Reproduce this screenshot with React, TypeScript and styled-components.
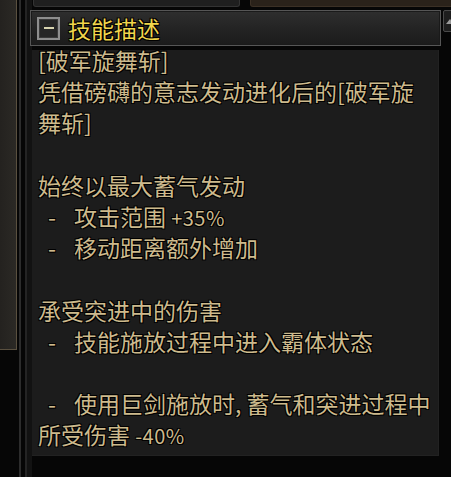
import styled, { createGlobalStyle } from "styled-components";

const GlobalStyle = createGlobalStyle`
  html, body {
    margin: 0;
    padding: 0;
    background: #060606;
  }
  * {
    box-sizing: border-box;
  }
`;

// each row of the description; num is the small latin value at the end
const lines: { text: string; num?: string; bullet?: boolean }[] = [
  { text: "[破军旋舞斩]" },
  { text: "凭借磅礴的意志发动进化后的[破军旋" },
  { text: "舞斩]" },
  { text: "" },
  { text: "始终以最大蓄气发动" },
  { text: "攻击范围 ", num: "+35%", bullet: true },
  { text: "移动距离额外增加", bullet: true },
  { text: "" },
  { text: "承受突进中的伤害" },
  { text: "技能施放过程中进入霸体状态", bullet: true },
  { text: "" },
  { text: "使用巨剑施放时, 蓄气和突进过程中", bullet: true },
  { text: "所受伤害 ", num: "-40%" },
];

const App = () => {
  return (
    <>
      <GlobalStyle />
      <Screen>
        <SidePanel />
        <Rail $left={2} $color="#2c2c2c" />
        <Rail $left={4} $color="#242424" />
        <Main>
          <TopStrip>
            <Stub $width="207px" $bg="#1f1f1f" $edge="#333" />
            <Stub $bg="#2a221a" $edge="#3b3025" />
          </TopStrip>
          <HeaderRow>
            <HeaderBar>
              <ToggleBox>
                <span />
              </ToggleBox>
              <Title>技能描述</Title>
            </HeaderBar>
            <ScrollBtn>
              <svg width="8" height="6" viewBox="0 0 8 6">
                <path d="M0 6 L4 1 L8 6 Z" fill="#9a9a9a" />
              </svg>
            </ScrollBtn>
          </HeaderRow>
          <Content>
            {lines.map((l, i) => (
              <Line key={i}>
                {l.bullet && <Dash>-</Dash>}
                {l.text}
                {l.num && <Num>{l.num}</Num>}
              </Line>
            ))}
          </Content>
        </Main>
      </Screen>
    </>
  );
};

const Screen = styled.div`
  width: 451px;
  height: 477px;
  display: flex;
  overflow: hidden;
  background: #060606;
  font-family: "Noto Sans CJK SC", "Noto Sans", sans-serif;
`;

const SidePanel = styled.div`
  width: 17px;
  height: 350px;
  flex-shrink: 0;
  background: linear-gradient(90deg, #24221f, #2b2925);
  border-right: 1px solid #5a503f;
  border-bottom: 1px solid #5a503f;
`;

const Rail = styled.div<{ $left: number; $color: string }>`
  width: 2px;
  flex-shrink: 0;
  margin-left: ${(p) => p.$left}px;
  background: ${(p) => p.$color};
`;

const Main = styled.div`
  flex: 1;
  display: flex;
  flex-direction: column;
  background: linear-gradient(90deg, #121212 0, #121212 5px, #060606 5px);
`;

const TopStrip = styled.div`
  height: 7px;
  display: flex;
  gap: 10px;
  padding-left: 6px;
`;

const Stub = styled.div<{ $width?: string; $bg: string; $edge: string }>`
  ${(p) => (p.$width ? `width: ${p.$width};` : "flex: 1;")}
  background: ${(p) => p.$bg};
  border: 1px solid ${(p) => p.$edge};
  border-top: none;
  border-radius: 0 0 3px 3px;
`;

const HeaderRow = styled.div`
  display: flex;
  align-items: flex-start;
  gap: 2px;
  margin-top: 3px;
  padding-left: 3px;
`;

const HeaderBar = styled.div`
  width: 411px;
  height: 36px;
  flex-shrink: 0;
  display: flex;
  align-items: center;
  gap: 8px;
  padding-left: 6px;
  border: 1px solid #565656;
  box-shadow: inset 0 0 0 1px #1a1a1a;
  background: linear-gradient(180deg, #2e2e2e 0%, #242424 50%, #1b1b1b 100%);
`;

const ToggleBox = styled.div`
  width: 23px;
  height: 23px;
  border: 2px solid #8e8e8e;
  box-shadow: inset 0 0 0 1px #3a3a3a;
  background: #262626;
  display: flex;
  align-items: center;
  justify-content: center;
  span {
    width: 10px;
    height: 2px;
    background: #d8d4b0;
  }
`;

const Title = styled.div`
  font-size: 23px;
  line-height: 36px;
  color: #f1d64c;
  text-shadow: 1px 1px 0 #000, -1px -1px 0 #000, 1px -1px 0 #000, -1px 1px 0 #000;
`;

const ScrollBtn = styled.div`
  width: 12px;
  height: 22px;
  flex-shrink: 0;
  border: 1px solid #4a4a4a;
  border-radius: 2px;
  background: #1e1e1e;
  display: flex;
  align-items: center;
  justify-content: center;
  padding-left: 2px;
`;

const Content = styled.div`
  width: 407px;
  height: 406px;
  margin-top: 4px;
  margin-left: 5px;
  padding: 0 0 0 6px;
  background: #1c1c1c;
  border-right: 1px solid #222;
  border-bottom: 1px solid #222;
`;

const Line = styled.div`
  height: 31.2px;
  line-height: 20px;
  font-size: 23px;
  white-space: nowrap;
  color: #cdba8d;
  text-shadow: 1px 1px 0 #000, -1px -1px 0 #000, 1px -1px 0 #000, -1px 1px 0 #000;
`;

const Dash = styled.span`
  display: inline-block;
  width: 36px;
  padding-left: 10px;
`;

const Num = styled.span`
  font-size: 20px;
  letter-spacing: 0.5px;
`;

export default App;
